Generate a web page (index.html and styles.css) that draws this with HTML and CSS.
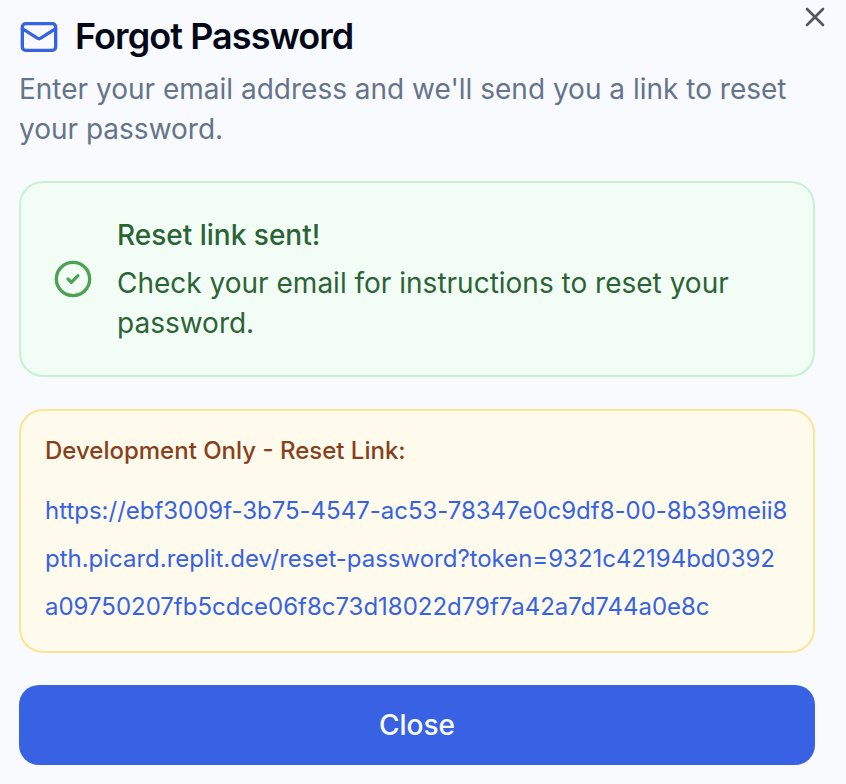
FILE: index.html
```html
<!DOCTYPE html>
<html lang="en">
<head>
<meta charset="utf-8">
<title>Forgot Password</title>
<link rel="stylesheet" href="styles.css">
</head>
<body>
<main class="dialog">
  <button class="dismiss" aria-label="Close dialog"><svg viewBox="0 0 24 24"><path d="M18 6 6 18M6 6l12 12"/></svg></button>
  <header>
    <h1><svg class="mail" viewBox="0 0 24 24"><rect width="20" height="16" x="2" y="4" rx="2"/><path d="m22 7-8.97 5.7a1.94 1.94 0 0 1-2.06 0L2 7"/></svg><span>Forgot Password</span></h1>
    <p class="intro">Enter your email address and we'll send you a link to reset your password.</p>
  </header>
  <section class="success">
    <svg class="check" viewBox="0 0 24 24"><circle cx="12" cy="12" r="10"/><path d="m9 12 2 2 4-4"/></svg>
    <div><p class="sent">Reset link sent!</p><p>Check your email for instructions to reset your password.</p></div>
  </section>
  <section class="dev">
    <p class="label">Development Only - Reset Link:</p>
    <a class="link">https://ebf3009f-3b75-4547-ac53-78347e0c9df8-00-8b39meii8<br>pth.picard.replit.dev/reset-password?token=9321c42194bd0392<br>a09750207fb5cdce06f8c73d18022d79f7a42a7d744a0e8c</a>
  </section>
  <button class="close">Close</button>
</main>
</body>
</html>
```
FILE: styles.css
```css
* { box-sizing: border-box; margin: 0; padding: 0; }
body { background: #f9fafd; font-family: Inter, sans-serif; font-size: 28px; line-height: 40px; }
svg { fill: none; stroke: currentColor; stroke-width: 2; stroke-linecap: round; stroke-linejoin: round; flex: none; display: block; }
button { border: 0; font: inherit; }
.dialog { position: relative; width: 846px; height: 784px; padding: 18px 31px 19px 19px; }
.dismiss { position: absolute; top: 1px; left: 799px; background: none; color: #55565f; }
.dismiss svg { width: 32px; height: 32px; }
h1 { display: flex; align-items: center; gap: 16px; height: 36px; font-size: 36px; line-height: 36px; font-weight: 600; letter-spacing: -0.93px; color: #020817; }
.mail { width: 40px; height: 40px; margin-top: 2px; color: #3662e3; }
.intro { margin-top: 15px; color: #64748b; }
.success { display: flex; align-items: center; margin-top: 32px; height: 196px; padding: 0 32px; gap: 24px; border: 2px solid #c4f3d2; border-radius: 24px; background: #f2fdf5; color: #2c6336; }
.check { width: 40px; height: 40px; color: #4fa156; }
.sent { font-weight: 500; margin-bottom: 8px; }
.dev { margin-top: 32px; height: 244px; padding: 20px 24px; border: 2px solid #f9e594; border-radius: 24px; background: #fefaec; font-size: 24px; }
.label { font-weight: 500; color: #87401b; }
.link { display: block; margin-top: 16px; line-height: 48px; letter-spacing: -0.015px; word-break: break-all; color: #3662e3; }
.close { display: block; width: 100%; height: 80px; margin-top: 32px; border-radius: 20px; background: #3862e3; color: #f8fafc; font-weight: 500; }
```
